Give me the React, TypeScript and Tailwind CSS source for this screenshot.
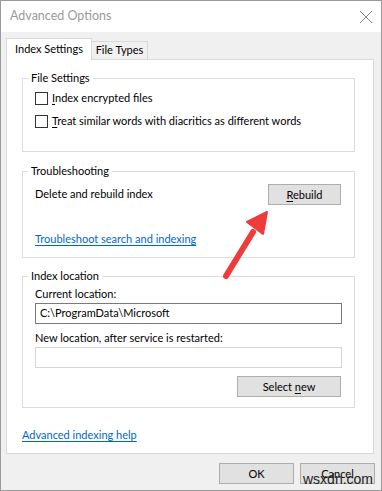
import React from 'react';

const font = { fontFamily: 'Lato, "Liberation Sans", Arial, sans-serif' };

function Group({ label, className, children }: { label: string; className: string; children: React.ReactNode }) {
  return (
    <div className={`relative border border-[#dcdcdc] ${className}`}>
      <span className="absolute -top-[9px] left-[5px] bg-white px-[3px] leading-4">{label}</span>
      {children}
    </div>
  );
}

function Button({ children, className }: { children: React.ReactNode; className: string }) {
  return (
    <button className={`h-[21px] border border-[#adadad] bg-[#e1e1e1] text-[11px] leading-none text-black ${className}`}>
      {children}
    </button>
  );
}

function Check({ mnemonic, rest }: { mnemonic: string; rest: string }) {
  return (
    <div className="flex h-[17px] items-center">
      <span className="h-[13px] w-[13px] border border-[#333333] bg-white" />
      <span className="ml-[4px]">
        <span className="underline underline-offset-2">{mnemonic}</span>
        {rest}
      </span>
    </div>
  );
}

export default function App() {
  return (
    <div className="relative flex h-[491px] w-[382px] flex-col border border-[#9a9a9a] bg-[#f0f0f0] text-[11px] text-black" style={font}>
      <div className="flex h-[31px] items-center justify-between bg-white pl-[9px] pr-[8px]">
        <span className="text-[12.5px] text-[#9a9a9a]">Advanced Options</span>
        <svg width="14" height="14" viewBox="0 0 14 14" className="mt-[1px]">
          <path d="M1 1 L13 13 M13 1 L1 13" stroke="#8a8a8a" strokeWidth="1" />
        </svg>
      </div>

      <div className="flex flex-col px-[5px] pt-[6px]">
        <div className="flex items-end">
          <div className="z-10 -mb-px flex h-[22px] w-[86px] items-center justify-center border border-b-0 border-[#d9d9d9] bg-white">
            Index Settings
          </div>
          <div className="flex h-[18px] w-[56px] items-center justify-center border border-l-0 border-b-0 border-[#d9d9d9] bg-[#f0f0f0]">
            File Types
          </div>
        </div>

        <div className="flex h-[395px] w-[368px] flex-col border border-[#d9d9d9] bg-white pl-[15px] pt-[18px]">
          <Group label="File Settings" className="h-[74px] w-[333px]">
            <div className="flex flex-col gap-[6px] pl-[12px] pt-[11px]">
              <Check mnemonic="I" rest="ndex encrypted files" />
              <Check mnemonic="T" rest="reat similar words with diacritics as different words" />
            </div>
          </Group>

          <Group label="Troubleshooting" className="mt-[19px] h-[87px] w-[333px]">
            <div className="flex flex-col pl-[12px] pr-[13px] pt-[12px]">
              <div className="flex h-[21px] items-center justify-between">
                <span>Delete and rebuild index</span>
                <Button className="w-[73px]">
                  <span className="underline underline-offset-2">R</span>ebuild
                </Button>
              </div>
              <a className="mt-[26px] leading-4 text-[#0066cc] underline underline-offset-2">
                Troubleshoot search and indexing
              </a>
            </div>
          </Group>

          <Group label="Index location" className="mt-[18px] h-[132px] w-[333px]">
            <div className="flex flex-col pl-[12px] pr-[13px] pt-[9px]">
              <span className="leading-4">Current location:</span>
              <div className="mt-[1px] flex h-[21px] w-[307px] items-center border border-[#7a7a7a] pl-[4px]">
                C:\ProgramData\Microsoft
              </div>
              <span className="mt-[6px] leading-4">New location, after service is restarted:</span>
              <div className="mt-[1px] h-[21px] w-[307px] border border-[#d4d4d4]" />
              <div className="mt-[8px] flex justify-end">
                <Button className="w-[104px]">
                  Select <span className="underline underline-offset-2">n</span>ew
                </Button>
              </div>
            </div>
          </Group>

          <a className="mt-[19px] leading-4 text-[#0066cc] underline underline-offset-2">Advanced indexing help</a>
        </div>

        <div className="mt-[9px] flex justify-end gap-[6px] pr-[1px]">
          <Button className="w-[75px]">OK</Button>
          <Button className="w-[75px]">Cancel</Button>
        </div>
      </div>

      <svg className="pointer-events-none absolute left-0 top-0" width="382" height="491">
        <line x1="225" y1="275" x2="252" y2="231" stroke="#ee3b3b" strokeWidth="6" strokeLinecap="round" />
        <polygon points="266,211 246,221 262,233" fill="#ee3b3b" stroke="#ee3b3b" strokeWidth="2" strokeLinejoin="round" />
      </svg>
      <span className="pointer-events-none absolute left-[302px] top-[470px] text-[14px] leading-4 text-[#222222]" style={{ fontFamily: '"Liberation Sans", Arial, sans-serif' }}>
        wsxdn.com
      </span>
    </div>
  );
}
